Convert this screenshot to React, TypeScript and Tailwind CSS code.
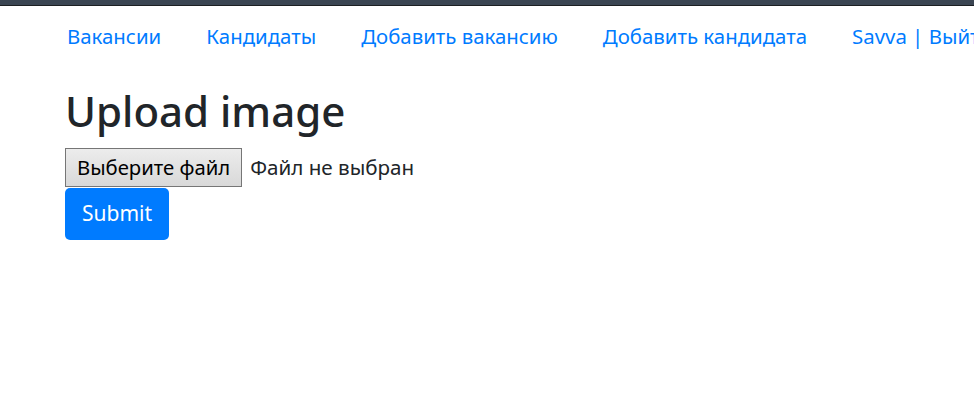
const links = ["Вакансии", "Кандидаты", "Добавить вакансию", "Добавить кандидата", "Savva | Выйти"]

export default function App() {
  return (
    <div className="w-[974px] h-[416px] overflow-hidden bg-white font-['Noto_Sans',sans-serif]">
      <div className="h-[5px] bg-[#3a4552]" />
      <div className="h-px bg-[#1c1f22]" />

      <div className="pl-[65px]">
        <nav className="flex gap-[45px] pl-[2px] pt-[15px] h-[60px] whitespace-nowrap">
          {links.map((l) => (
            <a key={l} className="text-[20.4px] leading-[30px] text-[#007bff]">
              {l}
            </a>
          ))}
        </nav>

        <h1 className="mt-[15px] text-[42px] leading-[60px] font-medium text-[#212529]">Upload image</h1>

        <div className="mt-[7px] flex items-center gap-[8px] h-[39px]">
          <div className="h-[39px] px-[11px] flex items-center border border-[#767676] bg-gradient-to-b from-[#ececec] to-[#d9d9d9] text-[20.3px] text-black">
            Выберите файл
          </div>
          <span className="text-[20.6px] text-[#212529]">Файл не выбран</span>
        </div>

        <button className="mt-px h-[52px] px-[17px] rounded-[5px] bg-[#007bff] text-white text-[21px]">
          Submit
        </button>
      </div>
    </div>
  )
}
